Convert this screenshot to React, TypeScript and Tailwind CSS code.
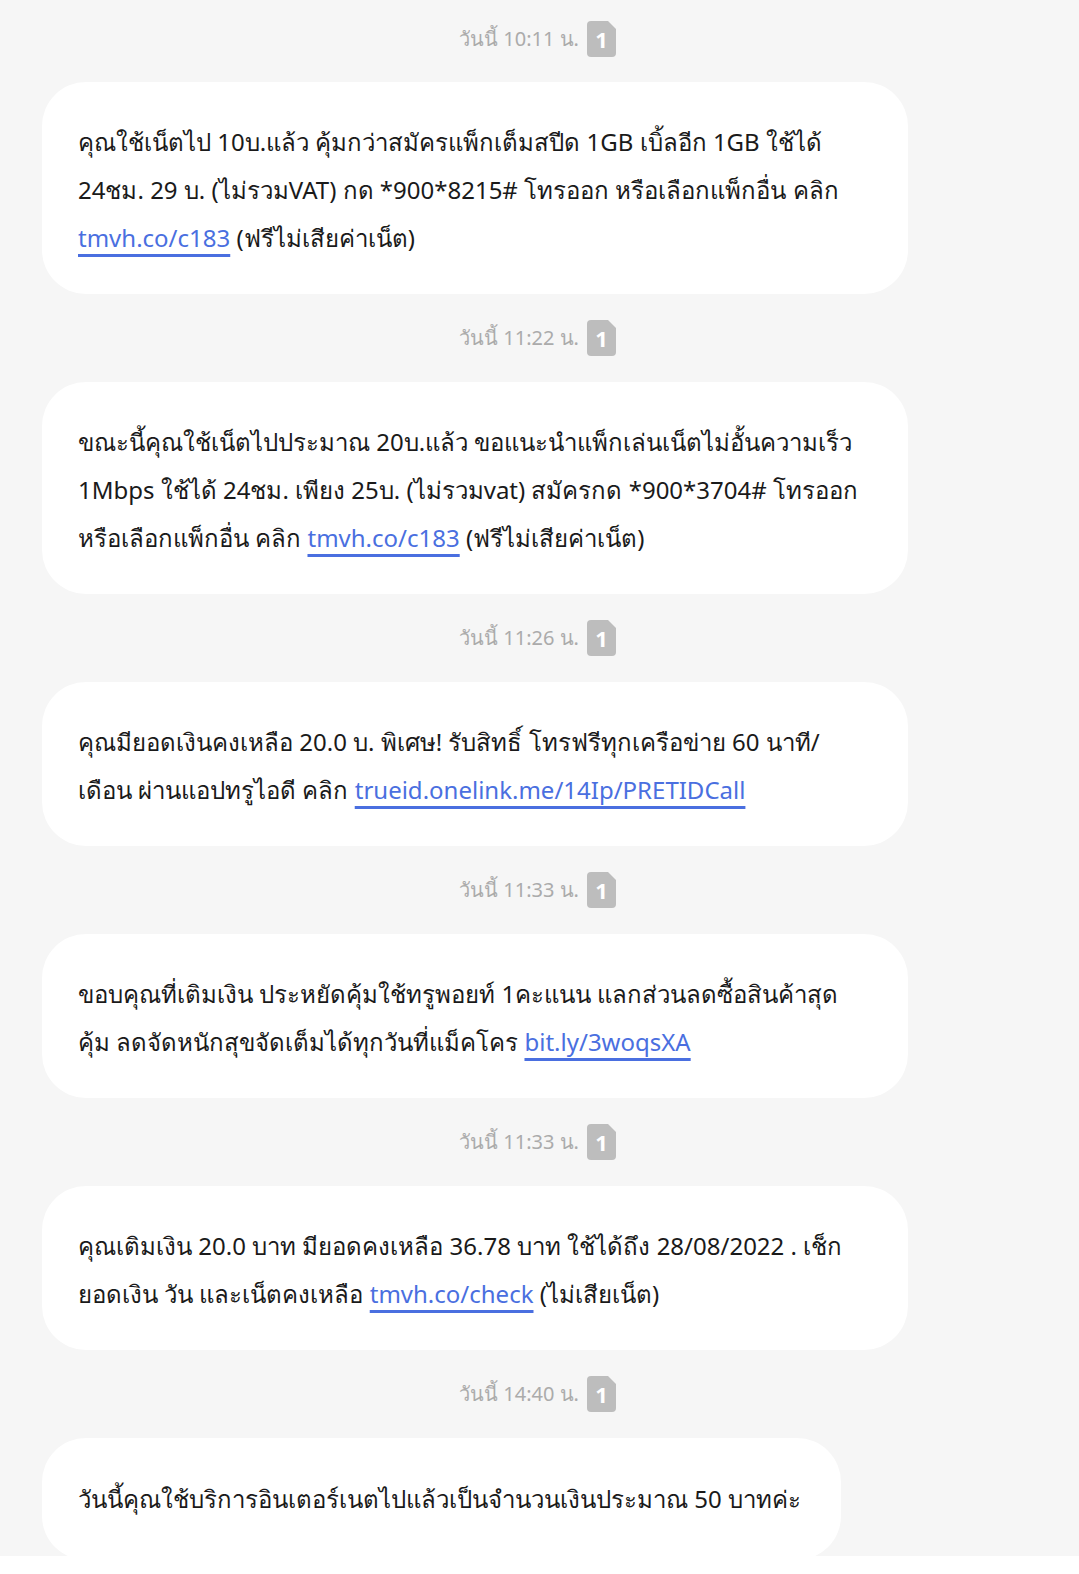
type Part = string | { link: string };

type Message = {
  time: string;
  lines: Part[][];
  last?: boolean;
};

const messages: Message[] = [
  {
    time: "วันนี้ 10:11 น.",
    lines: [
      ["คุณใช้เน็ตไป 10บ.แล้ว คุ้มกว่าสมัครแพ็กเต็มสปีด 1GB เบิ้ลอีก 1GB ใช้ได้"],
      ["24ชม. 29 บ. (ไม่รวมVAT) กด *900*8215# โทรออก หรือเลือกแพ็กอื่น คลิก"],
      [{ link: "tmvh.co/c183" }, " (ฟรีไม่เสียค่าเน็ต)"],
    ],
  },
  {
    time: "วันนี้ 11:22 น.",
    lines: [
      ["ขณะนี้คุณใช้เน็ตไปประมาณ 20บ.แล้ว ขอแนะนำแพ็กเล่นเน็ตไม่อั้นความเร็ว"],
      ["1Mbps ใช้ได้ 24ชม. เพียง 25บ. (ไม่รวมvat) สมัครกด *900*3704# โทรออก"],
      ["หรือเลือกแพ็กอื่น คลิก ", { link: "tmvh.co/c183" }, " (ฟรีไม่เสียค่าเน็ต)"],
    ],
  },
  {
    time: "วันนี้ 11:26 น.",
    lines: [
      ["คุณมียอดเงินคงเหลือ 20.0 บ. พิเศษ! รับสิทธิ์ โทรฟรีทุกเครือข่าย 60 นาที/"],
      ["เดือน ผ่านแอปทรูไอดี คลิก ", { link: "trueid.onelink.me/14Ip/PRETIDCall" }],
    ],
  },
  {
    time: "วันนี้ 11:33 น.",
    lines: [
      ["ขอบคุณที่เติมเงิน ประหยัดคุ้มใช้ทรูพอยท์ 1คะแนน แลกส่วนลดซื้อสินค้าสุด"],
      ["คุ้ม ลดจัดหนักสุขจัดเต็มได้ทุกวันที่แม็คโคร ", { link: "bit.ly/3woqsXA" }],
    ],
  },
  {
    time: "วันนี้ 11:33 น.",
    lines: [
      ["คุณเติมเงิน 20.0 บาท มียอดคงเหลือ 36.78 บาท ใช้ได้ถึง 28/08/2022 . เช็ก"],
      ["ยอดเงิน วัน และเน็ตคงเหลือ ", { link: "tmvh.co/check" }, " (ไม่เสียเน็ต)"],
    ],
  },
  {
    time: "วันนี้ 14:40 น.",
    lines: [["วันนี้คุณใช้บริการอินเตอร์เนตไปแล้วเป็นจำนวนเงินประมาณ 50 บาทค่ะ"]],
    last: true,
  },
];

const SimBadge = () => (
  <div className="relative w-[29px] h-[36px]">
    <svg width="29" height="36" viewBox="0 0 29 36" className="absolute inset-0">
      <path d="M4 0 H21 L29 8 V32 Q29 36 25 36 H4 Q0 36 0 32 V4 Q0 0 4 0 Z" fill="#bdbdbd" />
    </svg>
    <span className="absolute inset-0 flex items-center justify-center text-white text-[22px] font-bold leading-none font-['Noto_Sans',sans-serif]">
      1
    </span>
  </div>
);

const Timestamp = ({ time, first }: { time: string; first?: boolean }) => (
  <div className={`flex items-center justify-center gap-2 pr-1 ${first ? "h-[82px] pb-1" : "h-[88px]"}`}>
    <span className="text-[20px] text-[#ababab] leading-none">{time}</span>
    <SimBadge />
  </div>
);

const Bubble = ({ msg }: { msg: Message }) => (
  <div className="pl-[42px]">
    <div
      className={`bg-white rounded-[44px] px-9 text-[#1a1a1a] text-[24px] leading-[48px] ${
        msg.last ? "w-[799px] pt-[37px] pb-[37px]" : "w-[866px] pt-9 pb-8"
      }`}
    >
      {msg.lines.map((line, i) => (
        <div key={i} className="whitespace-nowrap">
          {line.map((part, j) =>
            typeof part === "string" ? (
              <span key={j}>{part}</span>
            ) : (
              <span
                key={j}
                className="text-[#4a6fe0] underline decoration-[#4a6fe0] decoration-[3px] underline-offset-[7px]"
              >
                {part.link}
              </span>
            )
          )}
        </div>
      ))}
    </div>
  </div>
);

export default function App() {
  return (
    <div className="w-[1079px] h-[1574px] bg-white overflow-hidden font-['Noto_Sans','DejaVu_Sans',sans-serif]">
      <div className="h-[1556px] bg-[#f6f6f6] overflow-hidden">
        {messages.map((m, i) => (
          <div key={i}>
            <Timestamp time={m.time} first={i === 0} />
            <Bubble msg={m} />
          </div>
        ))}
      </div>
    </div>
  );
}
